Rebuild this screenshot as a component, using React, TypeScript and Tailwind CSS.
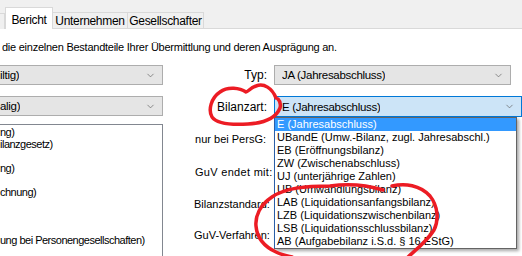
import { ChevronDown } from 'lucide-react'

const LIST_ITEMS = [
  'E (Jahresabschluss)',
  'UBandE (Umw.-Bilanz, zugl. Jahresabschl.)',
  'EB (Eröffnungsbilanz)',
  'ZW (Zwischenabschluss)',
  'UJ (unterjährige Zahlen)',
  'UB (Umwandlungsbilanz)',
  'LAB (Liquidationsanfangsbilanz)',
  'LZB (Liquidationszwischenbilanz)',
  'LSB (Liquidationsschlussbilanz)',
  'AB (Aufgabebilanz i.S.d. § 16 EStG)',
]

const LEFT_ROWS = ['ng)', 'ilanzgesetz)', '', 'ng)', '', 'chnung)', '', '', '', 'ung bei Personengesellschaften)']

function Combo({ text, active, className }: { text: string; active?: boolean; className: string }) {
  return (
    <div
      className={
        'flex h-[20px] items-center justify-between border pr-[6px] text-[11.5px] ' +
        (active ? 'border-[#0078d7] bg-[#cce4f7] ' : 'border-[#adadad] bg-[#e5e5e5] ') +
        className
      }
    >
      <span className="truncate leading-[18px] tracking-[-0.3px]">{text}</span>
      <ChevronDown className="h-[11px] w-[11px] text-[#606060]" strokeWidth={1.5} />
    </div>
  )
}

export default function App() {
  return (
    <div
      className="relative h-[256px] w-[522px] overflow-hidden bg-white text-[12px] text-black"
      style={{ fontFamily: '"Liberation Sans", Arial, sans-serif' }}
    >
      {/* tab strip */}
      <div className="flex h-[29px] items-end border-b border-[#d9d9d9] bg-[#f0f0f0] text-[12px] tracking-[-0.3px]">
        <div className="mb-[-1px] h-[16px] w-[5px] shrink-0 border-r border-t border-[#d9d9d9] bg-[#f0f0f0]" />
        <div className="mb-[-1px] flex h-[22px] w-[48px] shrink-0 items-start justify-center border-x border-t border-[#d9d9d9] bg-white pt-[3px]">
          Bericht
        </div>
        <div className="flex h-[16px] w-[75px] shrink-0 items-center justify-center whitespace-nowrap border-r border-t border-[#d9d9d9] bg-[#f0f0f0]">
          Unternehmen
        </div>
        <div className="flex h-[16px] w-[76px] shrink-0 items-center justify-center whitespace-nowrap border-r border-t border-[#d9d9d9] bg-[#f0f0f0]">
          Gesellschafter
        </div>
      </div>

      <div className="whitespace-nowrap pl-[2px] pt-[10px] text-[11px] leading-[16px] tracking-[-0.25px]">
        die einzelnen Bestandteile Ihrer Übermittlung und deren Ausprägung an.
      </div>

      {/* form */}
      <div className="mt-[10px] flex">
        <div className="flex w-[163px] flex-col">
          <Combo text="iltig)" className="w-[163px] border-l-0" />
          <Combo text="alig)" className="mt-[11px] w-[163px] border-l-0" />
          <div className="mt-[8px] h-[140px] border-r border-t border-[#828790] pt-[1px] text-[11px] tracking-[-0.5px]">
            {LEFT_ROWS.map((t, i) => (
              <div key={i} className="h-[12px] whitespace-nowrap leading-[12px]">
                {t}
              </div>
            ))}
          </div>
        </div>

        <div className="ml-[26px] flex flex-col text-[11px]">
          <div className="flex h-[20px] items-center">
            <span className="w-[78px] text-right text-[12px]">Typ:</span>
            <Combo text="JA (Jahresabschluss)" className="ml-[7px] w-[237px] pl-[7px]" />
          </div>
          <div className="mt-[11px] flex h-[21px] items-center">
            <span className="w-[78px] text-right text-[12px]">Bilanzart:</span>
            <Combo text="E (Jahresabschluss)" active className="ml-[7px] h-[21px] w-[248px] pl-[7px]" />
          </div>
          <div className="mt-[14px] flex h-[16px] items-center">
            <span className="w-[77px] text-right">nur bei PersG:</span>
          </div>
          <div className="mt-[17px] flex h-[16px] items-center pl-[6px] tracking-[0.3px]">GuV endet mit:</div>
          <div className="mt-[16px] flex h-[16px] items-center pl-[5px]">Bilanzstandard:</div>
          <div className="mt-[15px] flex h-[16px] items-center pl-[5px]">GuV-Verfahren:</div>
        </div>
      </div>

      {/* open dropdown list */}
      <div className="absolute left-[274px] top-[117px] w-[243px] border border-l-[#2a5fa8] border-[#646464] bg-white text-[11px] tracking-[0px] shadow-[2px_2px_3px_rgba(0,0,0,0.35)]">
        {LIST_ITEMS.map((t, i) => (
          <div
            key={t}
            className={'h-[13px] whitespace-nowrap pl-[2px] leading-[13px] ' + (i === 0 ? 'bg-[#3399ff] text-white' : '')}
          >
            {t}
          </div>
        ))}
      </div>

      {/* red annotations */}
      <svg className="pointer-events-none absolute left-0 top-0" width="522" height="256" viewBox="0 0 522 256">
        <g fill="none" stroke="#ec1c24" strokeWidth="3.5" strokeLinecap="round" strokeLinejoin="round">
          <path d="M 276 98 C 272 88, 264 83, 256 86 C 250 88, 248 92, 246 92 C 240 88, 228 86, 220 92 C 211 98, 208 110, 212 117 C 217 124, 232 125, 248 124 C 264 123, 276 118, 280 108 C 281 104, 280 101, 278 99" />
          <path d="M 383 190 C 370 186, 350 183, 330 186 C 305 186, 285 188, 272 197 C 260 205, 255 216, 256 226 C 257 238, 263 246, 276 252 C 282 255, 288 256, 292 257" />
          <path d="M 392 186 C 405 183, 420 185, 430 196 C 438 206, 439 220, 434 230 C 428 240, 418 248, 408 257" />
        </g>
      </svg>
    </div>
  )
}
